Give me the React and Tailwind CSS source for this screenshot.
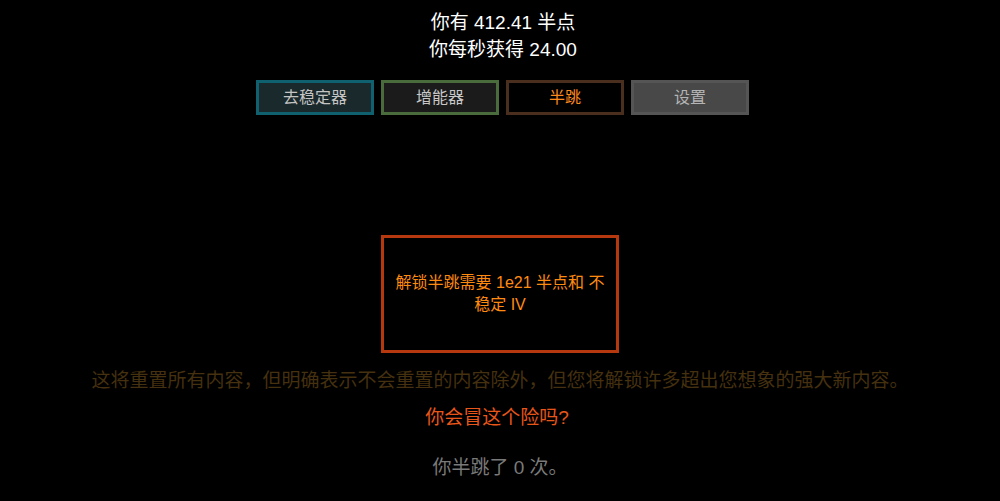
import React from 'react';

const tabs = [
  { label: '去稳定器', cls: 'border-[#0f6170] bg-[#1a292b] text-[#c4c4c4]' },
  { label: '增能器', cls: 'border-[#4a6c3c] bg-[#1b1b1b] text-[#c8c8c8]' },
  { label: '半跳', cls: 'border-[#4a2f1f] bg-black text-[#ff8a1c]' },
  { label: '设置', cls: 'border-[#555555] bg-[#484848] text-[#b4b4b4]' },
];

export default function App() {
  return (
    <div
      className="min-h-[501px] w-full bg-black flex flex-col items-center pt-[9px]"
      style={{ fontFamily: '"Liberation Sans", "Noto Sans CJK SC", sans-serif' }}
    >
      {/* Stats */}
      <div className="text-white text-[19px] leading-[27px] text-center ml-[6px]">
        <div>你有 412.41 半点</div>
        <div>你每秒获得 24.00</div>
      </div>

      {/* Tabs */}
      <div className="flex gap-[7px] mt-[17px] ml-[5px]">
        {tabs.map((t) => (
          <button
            key={t.label}
            className={`w-[118px] h-[35px] border-[3px] text-[16px] flex items-center justify-center ${t.cls}`}
          >
            {t.label}
          </button>
        ))}
      </div>

      {/* Unlock box */}
      <div className="mt-[120px] w-[238px] h-[118px] border-[3px] border-[#b5380f] flex items-center justify-center px-[10px] text-center text-[16px] leading-[22px] text-[#ff8a10]">
        解锁半跳需要 1e21 半点和 不稳定 IV
      </div>

      <p className="mt-[14px] text-[19px] leading-[28px] text-[#45300f] text-center">
        这将重置所有内容，但明确表示不会重置的内容除外，但您将解锁许多超出您想象的强大新内容。
      </p>

      <p className="mt-[9px] text-[19px] leading-[28px] text-[#e8561a] text-center mr-[6px]">你会冒这个险吗?</p>

      <p className="mt-[22px] text-[19px] leading-[28px] text-[#7a7a7a] text-center">你半跳了 0 次。</p>
    </div>
  );
}
